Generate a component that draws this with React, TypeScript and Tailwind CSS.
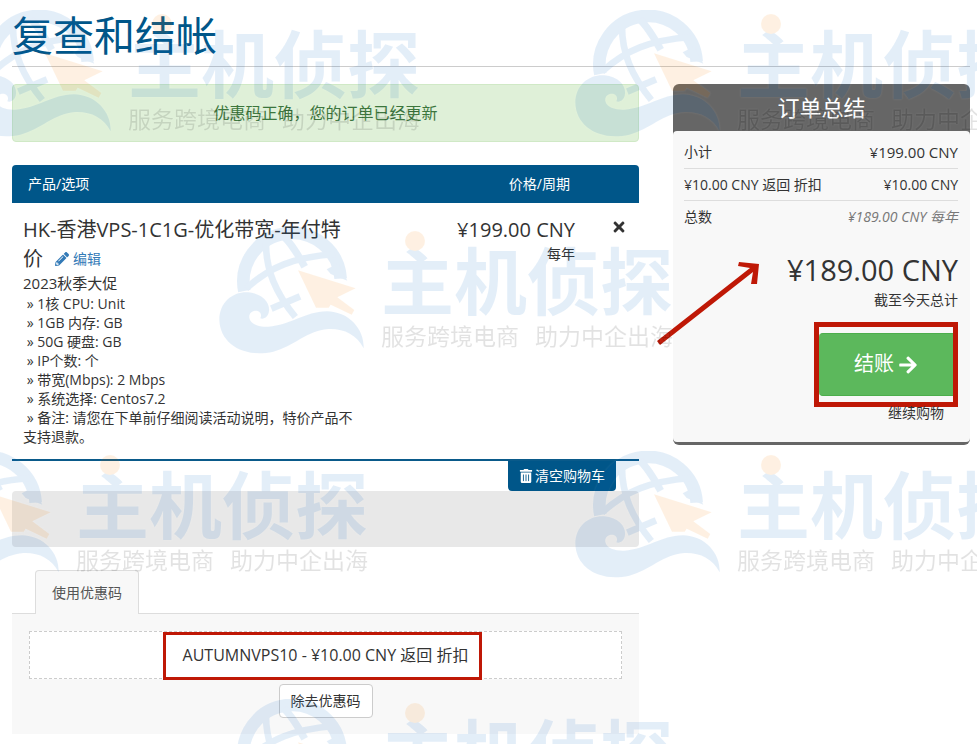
import { FaArrowRight, FaPencilAlt, FaTimes, FaTrashAlt } from "react-icons/fa";

const configOptions = [
  "1核 CPU: Unit",
  "1GB 内存: GB",
  "50G 硬盘: GB",
  "IP个数: 个",
  "带宽(Mbps): 2 Mbps",
  "系统选择: Centos7.2",
  "备注: 请您在下单前仔细阅读活动说明，特价产品不支持退款。",
];

const watermarkTiles = [
  { left: -34, top: 10 },
  { left: 575, top: 10 },
  { left: 219, top: 227 },
  { left: -86, top: 451 },
  { left: 575, top: 451 },
  { left: 219, top: 699 },
];

function Emblem() {
  return (
    <svg
      className="shrink-0"
      width="146"
      height="128"
      viewBox="27 21 438 384"
      fill="none"
      stroke="#0d69c5"
      strokeWidth="20"
      aria-hidden="true"
    >
      <path d="M103 213A146 146 0 1 1 392 176" strokeWidth="38" />
      <path d="M350 148L362 162L412 182L385 130Z" fill="#0d69c5" stroke="none" />
      <path d="M168 70C168 150 196 218 256 291" />
      <path d="M222 50C244 70 262 100 284 140" strokeWidth="22" />
      <path d="M108 206C180 140 250 112 375 102" />
      <path d="M184 266L270 229" />
      <path
        d="M28 300C28 245 70 214 115 217C160 221 180 250 177 273C175 290 163 299 151 295C157 284 150 272 138 272C125 272 116 281 118 294C122 314 150 321 175 320C240 316 285 275 350 274C420 275 463 330 461 385C440 343 400 325 355 327C290 332 250 380 190 395C100 415 30 370 28 300Z"
        fill="#0d69c5"
        stroke="none"
      />
      <path
        d="M264 151L437 205L382 232L433 270L425 284L378 262L362 254L356 263L318 263Z"
        fill="#f78205"
        stroke="none"
      />
    </svg>
  );
}

function Watermark() {
  return (
    <div className="pointer-events-none absolute inset-0 z-20 select-none overflow-hidden" aria-hidden="true">
      {watermarkTiles.map((tile) => (
        <div
          key={`${tile.left}-${tile.top}`}
          className="absolute flex gap-4 whitespace-nowrap opacity-11 drop-shadow-[0_0_1px_#fff]"
          style={{ left: tile.left, top: tile.top }}
        >
          <Emblem />
          <div className="relative pt-3 font-['Noto_Sans_CJK_SC',sans-serif]">
            <span className="absolute left-6 top-1 size-5 rounded-full bg-[#f78205]" />
            <div className="text-[73px] leading-[76px] font-bold text-[#0d69c5]">主机侦探</div>
            <div className="flex justify-between pt-2 text-[23px] leading-6 text-black">
              <span>服务跨境电商</span>
              <span>助力中企出海</span>
            </div>
          </div>
        </div>
      ))}
    </div>
  );
}

function CartTable() {
  return (
    <table className="mt-[23px] w-full table-fixed border-b-2 border-[#0a5a8a]">
      <thead>
        <tr className="h-[38px] bg-[#005689] text-white">
          <th className="w-[56%] rounded-tl pl-4 text-left font-normal">产品/选项</th>
          <th className="pr-[5px] text-right font-normal">价格/周期</th>
          <th className="w-16 rounded-tr" />
        </tr>
      </thead>
      <tbody>
        <tr className="align-top">
          <td className="pt-3 pr-2 pb-3 pl-[11px]">
            <div className="text-[20px] leading-[29px]">
              HK-香港VPS-1C1G-优化带宽-年付特价
              <a href="#edit" className="ml-3 inline-flex items-center gap-1 text-sm leading-5 text-[#337ab7]">
                <FaPencilAlt /> 编辑
              </a>
            </div>
            <div className="text-[15px] leading-5">2023秋季大促</div>
            <ul className="py-px leading-[19px]">
              {configOptions.map((option) => (
                <li key={option}>&nbsp;» {option}</li>
              ))}
            </ul>
          </td>
          <td className="pt-3 text-right">
            <div className="text-[20px] leading-[29px]">¥199.00 CNY</div>
            <div>每年</div>
          </td>
          <td className="pt-3 pr-3 text-right">
            <button type="button" aria-label="移除" className="py-1 text-base">
              <FaTimes />
            </button>
          </td>
        </tr>
      </tbody>
    </table>
  );
}

function PromoCode() {
  return (
    <section className="mt-[23px]">
      <div className="relative z-10 -mb-px flex pl-[23px]">
        <button
          type="button"
          className="h-11 rounded-t border border-b-0 border-[#ddd] bg-[#f8f8f8] px-4 text-[#555]"
        >
          使用优惠码
        </button>
      </div>
      <div className="border-t border-[#ddd] bg-[#f8f8f8] px-[17px] pt-[17px] pb-4 text-center">
        <div className="border border-dashed border-[#ccc] bg-white py-3 text-base leading-[22px]">
          <span className="relative inline-block">
            AUTUMNVPS10 - ¥10.00 CNY 返回 折扣
            <span className="absolute -top-3 -right-[14px] -bottom-[14px] -left-5 border-3 border-[#bf1806]" />
          </span>
        </div>
        <button type="button" className="mt-[5px] h-[34px] rounded border border-[#ccc] bg-white px-[11px]">
          除去优惠码
        </button>
      </div>
    </section>
  );
}

function OrderSummary() {
  return (
    <aside className="relative w-[297px] shrink-0 self-start rounded-md border-b-3 border-[#666] bg-[#666]">
      <h2 className="text-center text-[22px] leading-[47px] text-white">订单总结</h2>
      <div className="rounded bg-[#f8f8f8] pt-[5px] pr-3 pb-[19px] pl-[11px]">
        <div className="flex justify-between border-b border-[#ddd] leading-8">
          <span>小计</span>
          <span className="text-[15px]">¥199.00 CNY</span>
        </div>
        <div className="flex justify-between border-b border-[#ddd] leading-[31px]">
          <span>¥10.00 CNY 返回 折扣</span>
          <span>¥10.00 CNY</span>
        </div>
        <div className="flex justify-between leading-[31px]">
          <span>总数</span>
          <span className="text-[#777] italic">¥189.00 CNY 每年</span>
        </div>
        <div className="pt-[18px] text-right text-[29px] leading-10">¥189.00 CNY</div>
        <div className="text-right">截至今天总计</div>
        <div className="mt-3 flex justify-end">
          <div className="border-5 border-[#bf1806] py-[6px]">
            <button
              type="button"
              className="flex h-[63px] w-[134px] items-center justify-center gap-1 rounded-l border-y border-[#4cae4c] bg-[#5cb85c] text-[20px] text-white"
            >
              结账 <FaArrowRight />
            </button>
          </div>
        </div>
        <div className="-mt-1 pr-[14px] text-right">
          <a href="#continue">继续购物</a>
        </div>
      </div>
      {/* pointer towards the final total */}
      <svg
        className="absolute top-[178px] -left-4"
        width="104"
        height="84"
        viewBox="0 0 104 84"
        fill="#bf1806"
        aria-hidden="true"
      >
        <path d="M102 2L82 0L81 4L93 6L0 79L3 83L96 10L94 22L100 22Z" />
      </svg>
    </aside>
  );
}

export default function App() {
  return (
    <div className="relative min-h-screen overflow-hidden bg-white pr-[7px] pb-[9px] pl-3 font-['Open_Sans','Noto_Sans_CJK_SC',sans-serif] text-sm text-[#333]">
      <h1 className="border-b border-[#ccc] pt-[6px] pb-[2px] text-[41px] leading-[58px] text-[#005689]">复查和结帐</h1>
      <div className="mt-[17px] flex gap-[34px]">
        <main className="min-w-0 flex-1">
          <div
            role="status"
            className="rounded border border-[#d0e9c6] bg-[#dff0d8] text-center text-base leading-14 text-[#3c763d]"
          >
            优惠码正确，您的订单已经更新
          </div>
          <CartTable />
          <div className="flex justify-end pr-[23px]">
            <button
              type="button"
              className="flex h-[30px] items-center rounded-b bg-[#005689] px-[11px] text-white"
            >
              <FaTrashAlt className="mr-[2px]" />
              清空购物车
            </button>
          </div>
          <div className="h-14 rounded bg-[#e8e8e8]" />
          <PromoCode />
        </main>
        <OrderSummary />
      </div>
      <Watermark />
    </div>
  );
}
